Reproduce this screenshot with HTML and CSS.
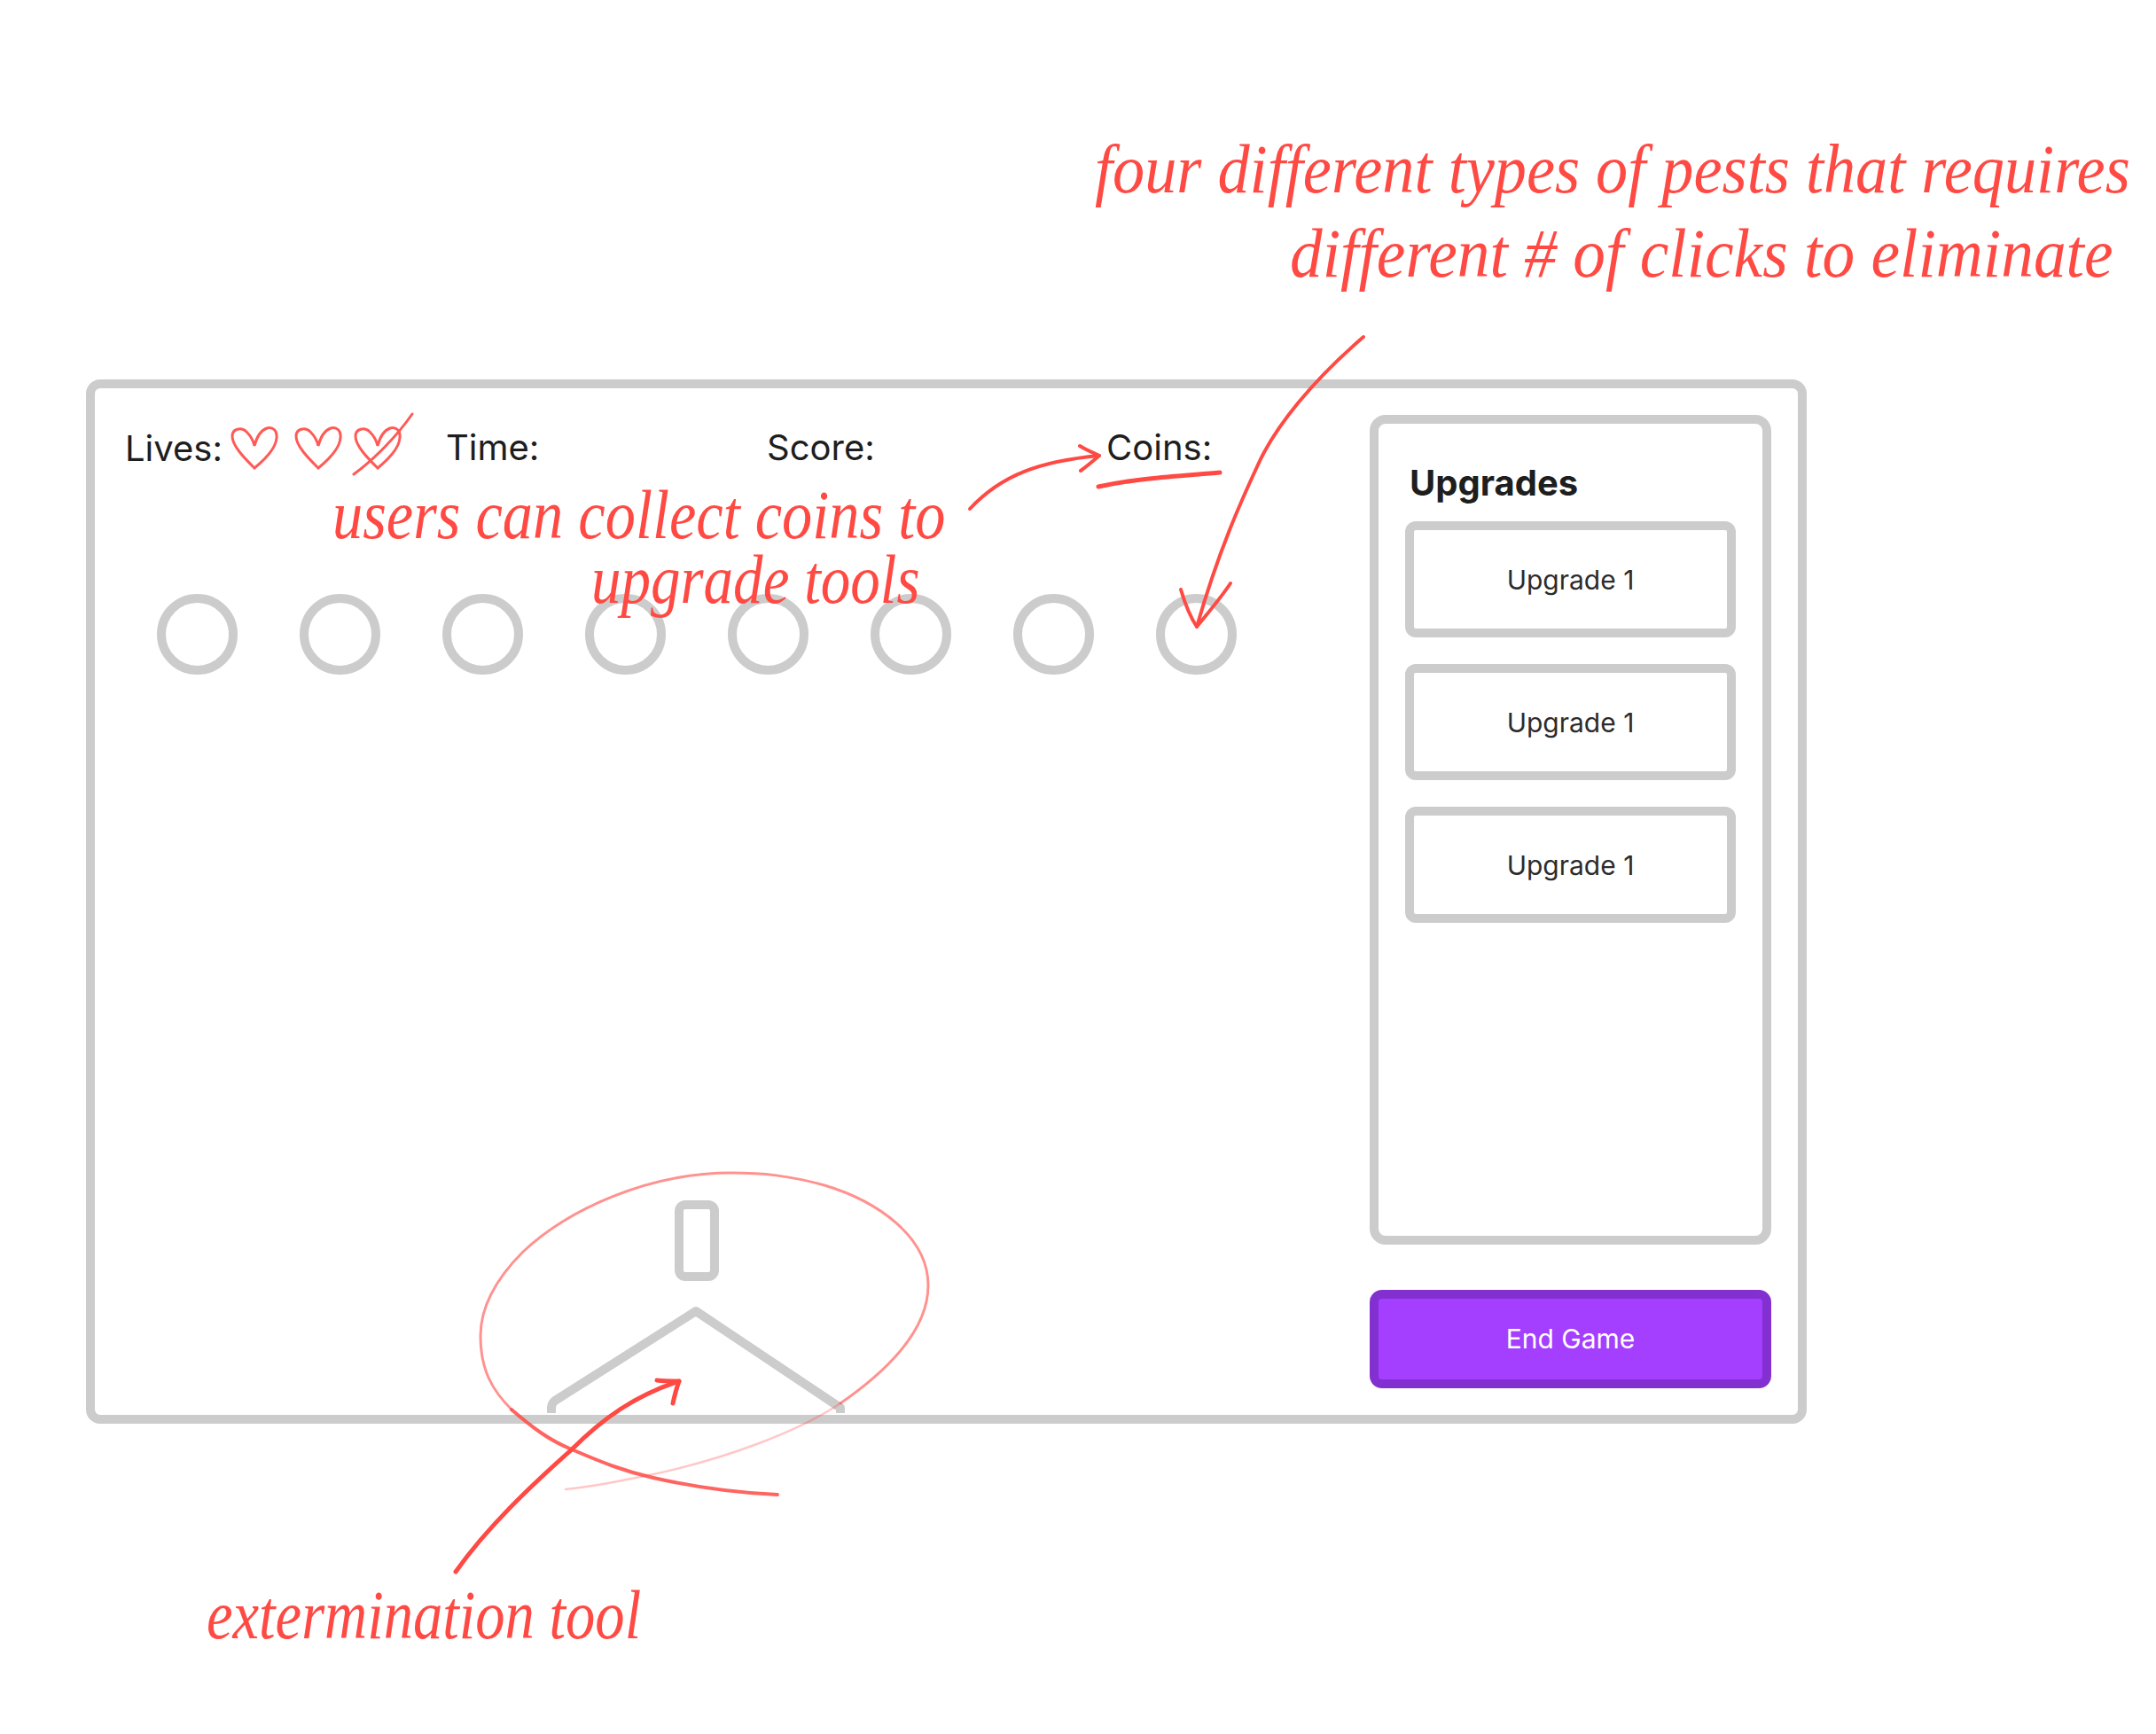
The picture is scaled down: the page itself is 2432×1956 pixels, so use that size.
FILE: index.html
```html
<!DOCTYPE html>
<html lang="en">
<head>
    <meta charset="UTF-8">
    <meta name="viewport" content="width=device-width, initial-scale=1.0">
    <title>Pest game wireframe</title>
    <link rel="stylesheet" href="styles.css">
</head>
<body>
    <div class="page">
        <div class="game">
            <div class="play-area">
                <div class="stats">
                    <div class="stat stat-lives">
                        <span>Lives:</span>
                        <svg class="heart" viewBox="0 0 54 50"><path d="M27 47C16 36 2 22 2 11C2 3 12 0 18 6C23 11 26 17 27 22C29 14 33 5 41 2C48 0 53 5 52 13C51 25 38 38 27 47Z"/></svg>
                        <svg class="heart" viewBox="0 0 54 50"><path d="M27 47C16 36 2 22 2 11C2 3 12 0 18 6C23 11 26 17 27 22C29 14 33 5 41 2C48 0 53 5 52 13C51 25 38 38 27 47Z"/></svg>
                        <svg class="heart heart-lost" viewBox="0 0 54 50"><path d="M27 47C16 36 2 22 2 11C2 3 12 0 18 6C23 11 26 17 27 22C29 14 33 5 41 2C48 0 53 5 52 13C51 25 38 38 27 47Z"/><path d="M66 -14C48 12 22 38 0 54"/></svg>
                    </div>
                    <div class="stat stat-time">Time:</div>
                    <div class="stat stat-score">Score:</div>
                    <div class="stat">Coins:</div>
                </div>
                <div class="pests">
                    <div class="pest"></div>
                    <div class="pest"></div>
                    <div class="pest"></div>
                    <div class="pest"></div>
                    <div class="pest"></div>
                    <div class="pest"></div>
                    <div class="pest"></div>
                    <div class="pest"></div>
                </div>
                <div class="tool">
                    <div class="nozzle"></div>
                    <svg class="tool-body" viewBox="0 0 338 130"><path d="M5 128V122Q5 117 9 114L168 13L331 122V128"/></svg>
                </div>
            </div>
            <div class="sidebar">
                <div class="upgrades">
                    <h2>Upgrades</h2>
                    <div class="upgrade">Upgrade 1</div>
                    <div class="upgrade">Upgrade 1</div>
                    <div class="upgrade">Upgrade 1</div>
                </div>
                <button class="end-btn">End Game</button>
            </div>
        </div>

        <!-- red notes drawn on top of the wireframe -->
        <svg class="marks" viewBox="0 0 2432 1956">
            <path d="M1538 380C1480 430 1440 480 1421 520C1400 565 1375 620 1350 707"/>
            <path d="M1332 665C1337 682 1342 695 1350 707C1362 692 1376 676 1388 658"/>
            <path d="M1094 574C1130 535 1175 520 1240 514"/>
            <path d="M1218 503C1226 508 1234 511 1240 514C1233 520 1226 526 1219 531"/>
            <path class="mark-thick" d="M1239 549C1285 539 1330 537 1376 533"/>
            <path class="mark-thick" d="M514 1773C550 1722 600 1675 645 1635C680 1600 715 1575 766 1558"/>
            <path class="mark-thick" d="M741 1557C750 1558 758 1558 766 1558C763 1566 761 1574 759 1583"/>
            <path class="mark-faint" d="M638 1680C680 1676 700 1670 737 1663C820 1645 900 1615 948 1583"/>
            <path class="mark-soft" d="M948 1583C1010 1540 1047 1495 1047 1450C1047 1395 990 1355 930 1337C890 1326 860 1323 825 1323C730 1323 640 1365 590 1412C555 1447 542 1480 542 1507C542 1545 555 1568 577 1590"/>
            <path class="mark-mid" d="M577 1590C600 1610 620 1625 645 1635C680 1650 705 1660 737 1667C790 1679 830 1684 877 1686"/>
        </svg>
        <span class="note note-pests-1">four different types of pests that requires</span>
        <span class="note note-pests-2">different # of clicks to eliminate</span>
        <span class="note note-coins-1">users can collect coins to</span>
        <span class="note note-coins-2">upgrade tools</span>
        <span class="note note-tool">extermination tool</span>
    </div>
</body>
</html>
```

FILE: styles.css
```css
* {
    margin: 0;
    padding: 0;
    box-sizing: border-box;
}

body {
    background-color: #ffffff;
    font-family: 'Inter', sans-serif;
    color: #1e1e1e;
}

.page {
    position: relative;
    width: 2432px;
    height: 1956px;
    padding: 428px 0 0 97px;
    overflow: hidden;
}

/* Game window */
.game {
    display: flex;
    width: 1941px;
    height: 1178px;
    padding: 30px 30px 29px 30px;
    border: 10px solid #cccccc;
    border-radius: 16px;
}

.play-area {
    flex: 1;
    display: flex;
    flex-direction: column;
}

.stats {
    display: flex;
    padding: 13px 0 0 3px;
    font-size: 40px;
    line-height: 48px;
}

.stat-lives {
    display: flex;
    align-items: center;
    width: 363px;
    padding-left: 1px;
}

.stat-time {
    width: 362px;
}

.stat-score {
    width: 383px;
}

.heart {
    flex: none;
    width: 54px;
    height: 50px;
    margin-left: 18px;
    overflow: visible;
    fill: none;
    stroke: #ff5a55;
    stroke-width: 3;
    stroke-linecap: round;
}

.stat-lives span + .heart {
    margin-left: 9px;
}

.stat-lives .heart-lost {
    margin-left: 13px;
}

.pests {
    display: flex;
    gap: 70px;
    margin: 139px 0 0 40px;
}

.pest {
    width: 91px;
    height: 91px;
    border: 10px solid #cccccc;
    border-radius: 50%;
}

/* Tool at the bottom of the play area */
.tool {
    display: flex;
    flex-direction: column;
    align-items: center;
    width: 338px;
    margin: auto 0 -29px 480px;
}

.nozzle {
    width: 50px;
    height: 91px;
    border: 10px solid #cccccc;
    border-radius: 12px;
}

.tool-body {
    width: 338px;
    height: 130px;
    margin-top: 21px;
    fill: none;
    stroke: #cccccc;
    stroke-width: 10;
    stroke-linejoin: round;
}

/* Sidebar */
.sidebar {
    display: flex;
    flex-direction: column;
    gap: 51px;
    width: 453px;
}

.upgrades {
    display: flex;
    flex-direction: column;
    gap: 30px;
    height: 936px;
    padding: 0 30px;
    border: 10px solid #cccccc;
    border-radius: 18px;
}

.upgrades h2 {
    margin: 43px 0 -11px 5px;
    font-size: 40px;
    font-weight: 700;
    line-height: 48px;
}

.upgrade {
    display: flex;
    align-items: center;
    justify-content: center;
    height: 131px;
    border: 10px solid #cccccc;
    border-radius: 12px;
    font-size: 30px;
    color: #2c2c2c;
}

.end-btn {
    height: 111px;
    padding-bottom: 2px;
    background-color: #a43fff;
    border: 10px solid #8330d0;
    border-radius: 14px;
    font-family: 'Inter', sans-serif;
    font-size: 30px;
    color: #ffffff;
}

/* Red notes */
.marks {
    position: absolute;
    top: 0;
    left: 0;
    width: 2432px;
    height: 1956px;
    fill: none;
    stroke: #ff4a44;
    stroke-width: 4;
    stroke-linecap: round;
    stroke-linejoin: round;
}

.marks .mark-thick {
    stroke-width: 5;
}

.marks .mark-faint {
    stroke-width: 2.5;
    opacity: 0.3;
}

.marks .mark-soft {
    stroke-width: 3;
    opacity: 0.6;
}

.marks .mark-mid {
    stroke-width: 4;
    opacity: 0.85;
}

.note {
    position: absolute;
    font-family: 'Liberation Serif', serif;
    font-style: italic;
    font-size: 60px;
    line-height: 54px;
    color: #ff4a44;
    white-space: nowrap;
    transform-origin: 0 47px;
}

.note-pests-1 {
    top: 170px;
    left: 1235px;
    transform: scale(1.204, 1.3);
}

.note-pests-2 {
    top: 265px;
    left: 1455px;
    transform: scale(1.223, 1.3);
}

.note-coins-1 {
    top: 560px;
    left: 375px;
    transform: scale(1.14, 1.3);
}

.note-coins-2 {
    top: 633px;
    left: 667px;
    transform: scale(1.117, 1.3);
}

.note-tool {
    top: 1801px;
    left: 233px;
    transform: scale(1.11, 1.3);
}
```
